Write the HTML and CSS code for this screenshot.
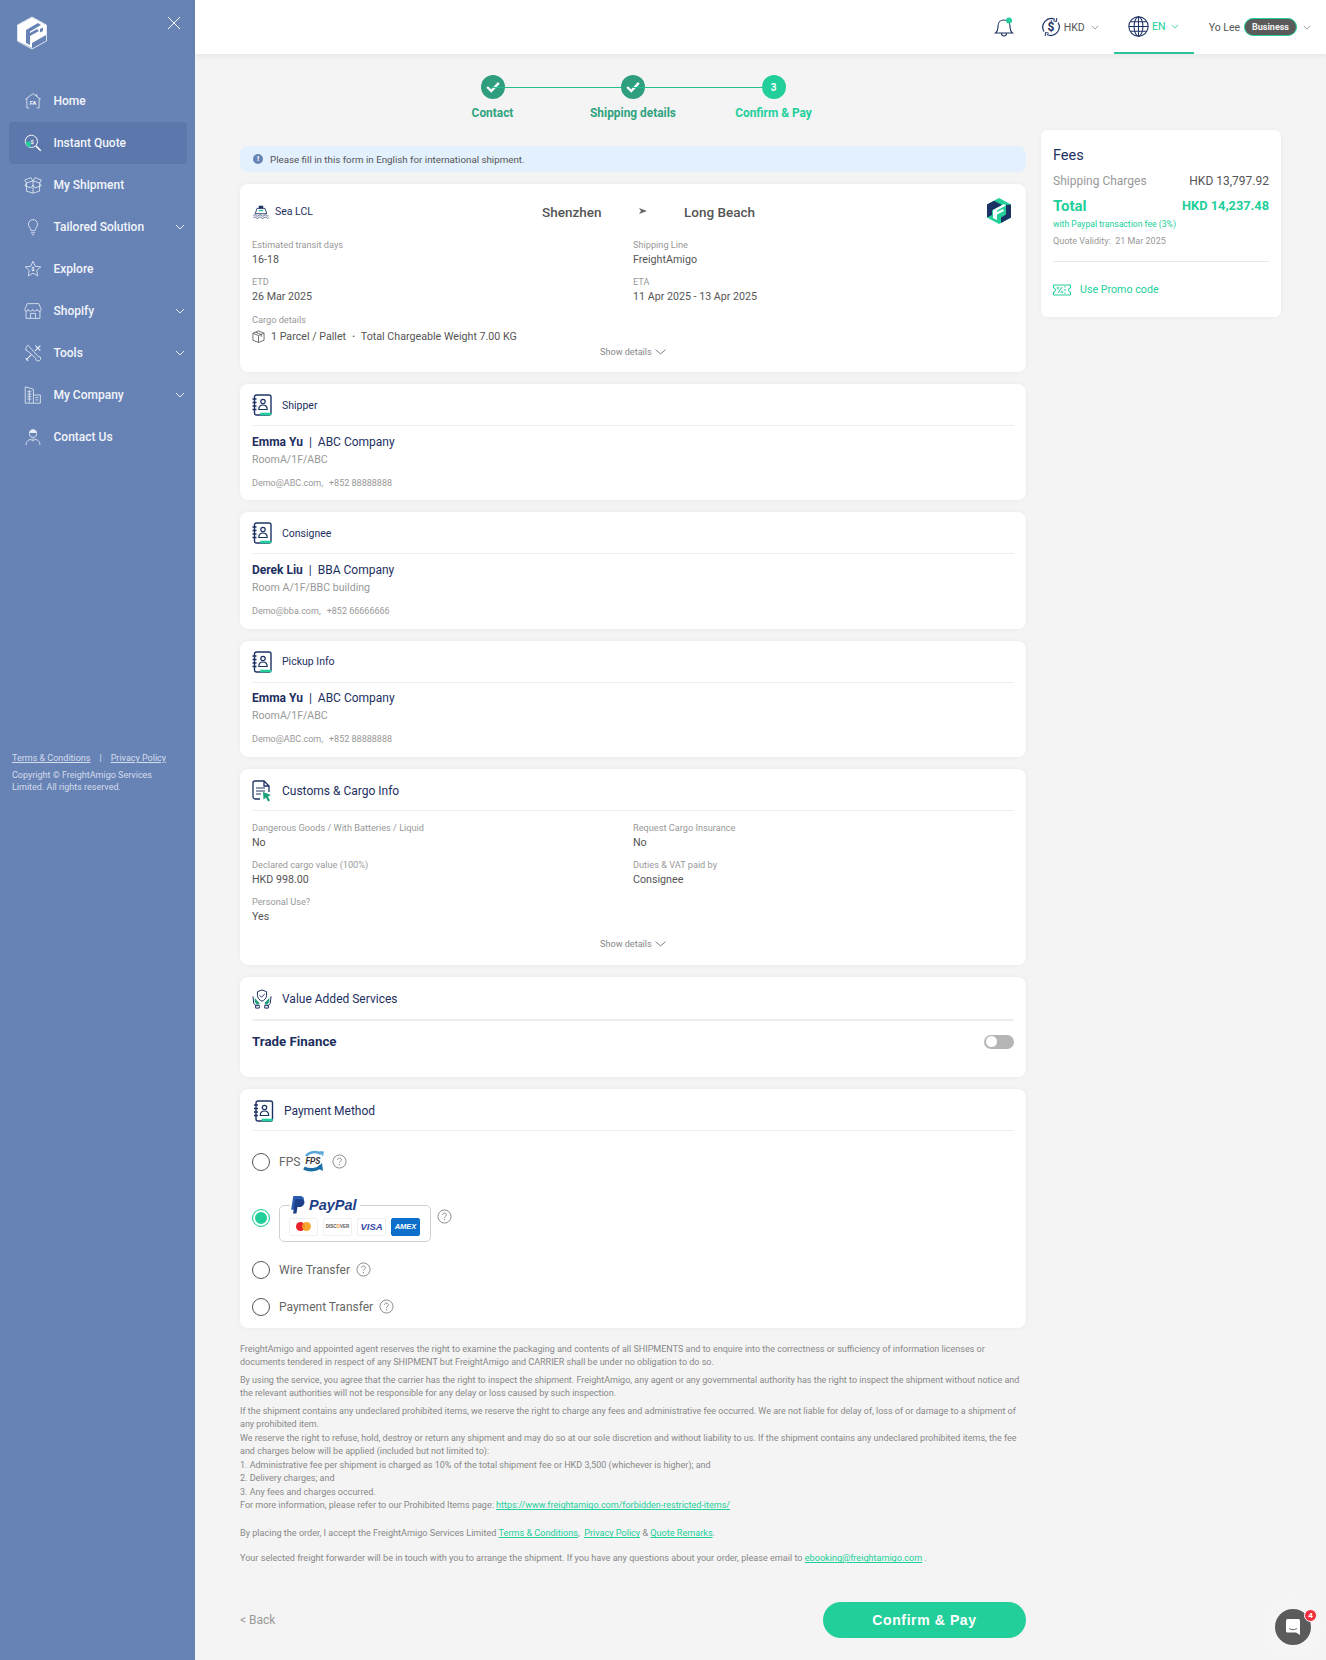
FILE: index.html
```html
<!DOCTYPE html>
<html lang="en">
<head>
  <meta charset="UTF-8">
  <meta name="viewport" content="width=device-width, initial-scale=1.0">
  <title>FreightAmigo - Confirm &amp; Pay</title>
  <link rel="stylesheet" href="styles.css">
</head>
<body>
  <svg class="defs" width="0" height="0">
    <symbol id="book" viewBox="0 0 20 22">
      <rect x="2.500" y="1" width="16.500" height="20" rx="2" fill="none" stroke="#1d3264" stroke-width="1.400"/>
      <path d="M9 19.500h9.500v1H9z" fill="#22cf9b" stroke="#22cf9b" stroke-width="1.600"/>
      <path d="M.5 5h4M.5 8.500h4M.5 12h4M.5 15.500h4" stroke="#1d3264" stroke-width="1.300"/>
      <circle cx="11" cy="7.500" r="2.200" fill="none" stroke="#1d3264" stroke-width="1.200"/>
      <path d="M6.800 15.500c0-3 1.800-4.500 4.200-4.500s4.200 1.500 4.200 4.500z" fill="none" stroke="#1d3264" stroke-width="1.200"/>
    </symbol>
    <symbol id="chev" viewBox="0 0 10 6">
      <path d="M1 1l4 4 4-4" fill="none" stroke="currentColor" stroke-width="1"/>
    </symbol>
    <symbol id="help" viewBox="0 0 16 16">
      <circle cx="8" cy="8" r="7" fill="none" stroke="#888" stroke-width="1"/>
      <path d="M5.900 6.300c0-1.300 1-2 2.100-2s2.100.7 2.100 1.900c0 1.500-2.100 1.500-2.100 3.200" fill="none" stroke="#888" stroke-width="1"/>
      <circle cx="8" cy="11.400" r=".7" fill="#888"/>
    </symbol>
  </svg>

  <div class="page">
    <aside class="sidebar">
      <div class="side-top">
        <svg class="side-logo" viewBox="0 0 32 34">
          <polygon points="16,1 30.500,9 30.500,25 16,33 1.500,25 1.500,9" fill="none" stroke="#fff" stroke-width=".8"/>
          <polygon points="16,1.500 30,9 30,19 16,27 16,32 2,25 2,9" fill="#fff"/>
          <polygon points="10,14 22,7 25,9 14,15.500 14,17 21,13 23,15 14,20 14,29 10,27" fill="#6783b5"/>
          <polygon points="24,13 27,11.500 27,15 24,16.500" fill="#6783b5"/>
        </svg>
        <svg class="side-close" viewBox="0 0 14 14"><path d="M1 1l12 12M13 1L1 13" stroke="#fff" stroke-width="1"/></svg>
      </div>

      <nav class="side-nav">
        <a class="nav-item">
          <svg class="nav-icon" viewBox="0 0 22 22"><path d="M1.500 9L11 2l9.500 7M3.500 8v11.500h3M18.500 8v11.500h-3M15.500 2.500v3" fill="none" stroke="#e6ecf6" stroke-width="1"/><text x="11" y="16" class="nav-icon-text" text-anchor="middle">FA</text></svg>
          <span>Home</span>
        </a>
        <a class="nav-item active">
          <svg class="nav-icon" viewBox="0 0 22 22"><circle cx="9" cy="9" r="7.500" fill="none" stroke="#fff" stroke-width="1.100"/><path d="M2 11a7.500 7.500 0 0 0 6 5.500V9.500H3z" fill="#22cf9b"/><path d="M14.500 14.500l6 6" stroke="#fff" stroke-width="1.800"/><text x="10" y="12.500" class="nav-icon-text" text-anchor="middle">$</text></svg>
          <span>Instant Quote</span>
        </a>
        <a class="nav-item">
          <svg class="nav-icon" viewBox="0 0 22 22"><path d="M11 6l8 2.500v10L11 21l-8-2.500v-10zM11 6v15M3 8.500L.800 5 8.500 2 11 6l2.500-4 7.700 3L19 8.500M3 8.500L1 12l7.500 2.500L11 11l2.500 3.500L21 12l-2-3.500" fill="none" stroke="#e6ecf6" stroke-width="1"/></svg>
          <span>My Shipment</span>
        </a>
        <a class="nav-item">
          <svg class="nav-icon" viewBox="0 0 22 22"><path d="M8.500 15.500c0-3-3-4-3-8a5.500 5.500 0 0 1 11 0c0 4-3 5-3 8zM8.500 18h5M9.500 20.500h3" fill="none" stroke="#e6ecf6" stroke-width="1"/></svg>
          <span>Tailored Solution</span>
          <svg class="nav-chev"><use href="#chev"/></svg>
        </a>
        <a class="nav-item">
          <svg class="nav-icon" viewBox="0 0 22 22"><path d="M11 1.500l2.800 6.200 6.700.7-5 4.500 1.400 6.600-5.900-3.400-5.900 3.400 1.400-6.600-5-4.500 6.700-.7z" fill="none" stroke="#e6ecf6" stroke-width="1"/><text x="11" y="13.500" class="nav-icon-text" text-anchor="middle">$</text></svg>
          <span>Explore</span>
        </a>
        <a class="nav-item">
          <svg class="nav-icon" viewBox="0 0 22 22"><path d="M4 2h14l3 7c0 1.500-1 2-2.500 2s-2.500-.5-2.500-2c0 1.500-1.500 2-3 2s-2.500-.5-2.500-2c0 1.500-1.500 2-3 2S5 10.500 5 9c0 1.500-1 2-2.500 2S1 10.500 1 9zM2.500 11v9h17v-9M8 20v-6h6v6" fill="none" stroke="#e6ecf6" stroke-width="1"/></svg>
          <span>Shopify</span>
          <svg class="nav-chev"><use href="#chev"/></svg>
        </a>
        <a class="nav-item">
          <svg class="nav-icon" viewBox="0 0 22 22"><path d="M3 3l2-1.500 4 4.500 8 9 3 1 .5 3-2.500 2-3-1-1-3-9-8-3-1.500z" fill="none" stroke="#e6ecf6" stroke-width="1"/><path d="M20 2l-6.500 6.500M14 2l6 6M3 19l6-6M5 20.500l-3-3" fill="none" stroke="#e6ecf6" stroke-width="1.400"/></svg>
          <span>Tools</span>
          <svg class="nav-chev"><use href="#chev"/></svg>
        </a>
        <a class="nav-item">
          <svg class="nav-icon" viewBox="0 0 22 22"><path d="M1.500 1l10 3v17h-10zM11.500 11h8.500v10h-8.500M4 7h5M4 10h5M4 13h5M4 16h5M6.500 5v15M14 14h3.500M14 17h3.500" fill="none" stroke="#e6ecf6" stroke-width="1"/></svg>
          <span>My Company</span>
          <svg class="nav-chev"><use href="#chev"/></svg>
        </a>
        <a class="nav-item">
          <svg class="nav-icon" viewBox="0 0 22 22"><circle cx="11" cy="7" r="4.500" fill="none" stroke="#e6ecf6" stroke-width="1"/><path d="M6.500 6c0-6 9-6 9 0h-9z" fill="#e6ecf6"/><path d="M2.500 21c0-5 3.500-7.500 8.500-7.500s8.500 2.500 8.500 7.500M9 15.500h3.500" fill="none" stroke="#e6ecf6" stroke-width="1"/></svg>
          <span>Contact Us</span>
        </a>
      </nav>

      <div class="side-foot">
        <div class="side-links"><a>Terms &amp; Conditions</a><span>|</span><a>Privacy Policy</a></div>
        <p>Copyright © FreightAmigo Services Limited. All rights reserved.</p>
      </div>
    </aside>

    <div class="right-side">
      <header class="topbar">
        <div class="top-item bell">
          <svg class="ic-bell" viewBox="0 0 20 20"><path d="M1.500 16c2-1.500 2.500-3 2.500-7 0-3.500 2.500-6 6-6s6 2.500 6 6c0 4 .5 5.500 2.500 7zM7.500 16.500a2.500 2.500 0 0 0 5 0" fill="none" stroke="#1d3264" stroke-width="1.100"/><circle cx="15" cy="3.500" r="3" fill="#22cf9b"/></svg>
        </div>
        <div class="top-item cur">
          <svg class="ic-cur" viewBox="0 0 20 20"><path d="M3 14.500A8.500 8.500 0 0 1 14 2.500M17 5.500A8.500 8.500 0 0 1 6 17.500" fill="none" stroke="#1d3264" stroke-width="1.200"/><path d="M15.800 1l-.3 3.500-3.300-.7M4.200 19l.3-3.500 3.300.7" fill="none" stroke="#1d3264" stroke-width="1"/><text x="10" y="14" class="cur-sign" text-anchor="middle">$</text></svg>
          <span>HKD</span>
          <svg class="top-chev"><use href="#chev"/></svg>
        </div>
        <div class="top-item lang">
          <svg class="ic-globe" viewBox="0 0 20 20"><g fill="none" stroke="#1d3264" stroke-width="1"><circle cx="10" cy="10" r="9.200"/><ellipse cx="10" cy="10" rx="4.200" ry="9.200"/><path d="M10 .8v18.400M.8 10h18.400M2 5.500h16M2 14.500h16"/></g></svg>
          <span>EN</span>
          <svg class="top-chev"><use href="#chev"/></svg>
        </div>
        <div class="top-item user">
          <span>Yo Lee</span>
          <b class="pill">Business</b>
          <svg class="top-chev"><use href="#chev"/></svg>
        </div>
      </header>

      <main class="content">
        <div class="col-main">
          <div class="stepper">
            <div class="step done">
              <i class="dot"><svg viewBox="0 0 12 10"><path d="M1 5l3.500 3.500L11 1.500" fill="none" stroke="#fff" stroke-width="2"/></svg></i>
              <span>Contact</span>
            </div>
            <div class="step done">
              <i class="dot"><svg viewBox="0 0 12 10"><path d="M1 5l3.500 3.500L11 1.500" fill="none" stroke="#fff" stroke-width="2"/></svg></i>
              <span>Shipping details</span>
            </div>
            <div class="step now">
              <i class="dot">3</i>
              <span>Confirm &amp; Pay</span>
            </div>
          </div>

          <div class="notice">
            <i class="notice-dot">!</i>
            <span>Please fill in this form in English for international shipment.</span>
          </div>

          <section class="card top-card">
            <div class="route">
              <div class="mode">
                <svg class="ic-ship" viewBox="0 0 18 16"><path d="M6.500 1.500h5v3h-5z" fill="#1d3264"/><path d="M4.500 4.500h9l2 6h-13z" fill="none" stroke="#1d3264" stroke-width="1"/><path d="M6.500 7h5" stroke="#22cf9b" stroke-width="1.400"/><path d="M.5 12.500c1.500-1 2-1 3 0s1.500 1 3 0 2-1 3 0 1.500 1 3 0 2-1 3 0 1 .8 2 .2M.5 15c1.500-1 2-1 3 0s1.500 1 3 0 2-1 3 0 1.500 1 3 0 2-1 3 0 1 .8 2 .2" fill="none" stroke="#1d3264" stroke-width=".8"/></svg>
                <span>Sea LCL</span>
              </div>
              <div class="port from">Shenzhen</div>
              <svg class="route-arrow" viewBox="0 0 8 6"><path d="M0 0l8 3-8 3 2-3z" fill="#666"/></svg>
              <div class="port to">Long Beach</div>
              <svg class="ic-logo" viewBox="0 0 24 26">
                <polygon points="12,0 24,6.500 24,19.500 12,26 0,19.500 0,6.500" fill="#22cf9b"/>
                <polygon points="0,6.500 7,2.800 15,7 5,12.500 5,17 0,19.500" fill="#1d3264"/>
                <polygon points="24,6.500 24,19.500 14,25 14,19.500 19,16.500 19,7" fill="#1d3264"/>
                <polygon points="6,12 17,6 19,7.500 10,12.500 10,14 16,11 17,13 10,16.500 10,22 6,20" fill="#fff"/>
              </svg>
            </div>

            <div class="info-grid">
              <div class="info"><label>Estimated transit days</label><p>16-18</p></div>
              <div class="info"><label>Shipping Line</label><p>FreightAmigo</p></div>
              <div class="info"><label>ETD</label><p>26 Mar 2025</p></div>
              <div class="info"><label>ETA</label><p>11 Apr 2025 - 13 Apr 2025</p></div>
            </div>
            <div class="cargo">
              <label>Cargo details</label>
              <p>
                <svg class="ic-box" viewBox="0 0 14 14"><path d="M7 1l6 2.500v7.500L7 13.500 1 11V3.500zM1 3.500L7 6l6-2.500M7 6v7.500M4 2.300l6 2.500v2.500" fill="none" stroke="#666" stroke-width="1"/></svg>
                1 Parcel / Pallet<span class="sep">•</span>Total Chargeable Weight 7.00 KG
              </p>
            </div>
            <div class="show-details">Show details <svg class="show-chev" viewBox="0 0 12 6"><path d="M.5.5L6 5 11.500.5" fill="none" stroke="#666" stroke-width=".9"/></svg></div>
          </section>

          <section class="card party">
            <div class="card-head"><svg class="ic-head"><use href="#book"/></svg><h3 class="head-small">Shipper</h3></div>
            <p class="name"><b>Emma Yu</b><span>|</span>ABC Company</p>
            <p class="addr">RoomA/1F/ABC</p>
            <p class="contact">Demo@ABC.com,<span></span>+852 88888888</p>
          </section>

          <section class="card party">
            <div class="card-head"><svg class="ic-head"><use href="#book"/></svg><h3 class="head-small">Consignee</h3></div>
            <p class="name"><b>Derek Liu</b><span>|</span>BBA Company</p>
            <p class="addr">Room A/1F/BBC building</p>
            <p class="contact">Demo@bba.com,<span></span>+852 66666666</p>
          </section>

          <section class="card party">
            <div class="card-head"><svg class="ic-head"><use href="#book"/></svg><h3 class="head-small">Pickup Info</h3></div>
            <p class="name"><b>Emma Yu</b><span>|</span>ABC Company</p>
            <p class="addr">RoomA/1F/ABC</p>
            <p class="contact">Demo@ABC.com,<span></span>+852 88888888</p>
          </section>

          <section class="card customs">
            <div class="card-head low">
              <svg class="ic-head" viewBox="0 0 20 22"><path d="M8 19H3a2 2 0 0 1-2-2V3a2 2 0 0 1 2-2h9l5 5v6M12 1v5h5" fill="none" stroke="#1d3264" stroke-width="1.300"/><path d="M4 8h9M4 11h9M4 14h5" stroke="#1d3264" stroke-width="1.200"/><path d="M11 12l8 3-3 1.500 2 4-2 1-2-4-2.500 2z" fill="#1f9f7c"/></svg>
              <h3>Customs &amp; Cargo Info</h3>
            </div>
            <div class="info-grid">
              <div class="info"><label>Dangerous Goods / With Batteries / Liquid</label><p>No</p></div>
              <div class="info"><label>Request Cargo Insurance</label><p>No</p></div>
              <div class="info"><label>Declared cargo value (100%)</label><p>HKD 998.00</p></div>
              <div class="info"><label>Duties &amp; VAT paid by</label><p>Consignee</p></div>
              <div class="info"><label>Personal Use?</label><p>Yes</p></div>
            </div>
            <div class="show-details">Show details <svg class="show-chev" viewBox="0 0 12 6"><path d="M.5.5L6 5 11.500.5" fill="none" stroke="#666" stroke-width=".9"/></svg></div>
          </section>

          <section class="card services">
            <div class="card-head thick low">
              <svg class="ic-head" viewBox="0 0 22 22"><path d="M11 1l5 2v4c0 3-2 5-5 6.500C8 12 6 10 6 7V3z" fill="none" stroke="#1d3264" stroke-width="1.100"/><path d="M8.500 7l2 2 3.500-3.500" fill="none" stroke="#1d3264" stroke-width="1.100"/><path d="M1 8l1 8 3 3M21 8l-1 8-3 3" fill="none" stroke="#1d3264" stroke-width="1.100"/><path d="M3 10l5 5v2H5L3 14zM19 10l-5 5v2h3l2-3z" fill="#1f9f7c"/><path d="M4 18h4v3H4zM14 18h4v3h-4z" fill="none" stroke="#1d3264" stroke-width="1.100"/></svg>
              <h3>Value Added Services</h3>
            </div>
            <div class="finance">
              <span>Trade Finance</span>
              <i class="toggle"></i>
            </div>
          </section>

          <section class="card payment">
            <div class="card-head low"><svg class="ic-head pay-book"><use href="#book"/></svg><h3>Payment Method</h3></div>
            <div class="pay-row fps">
              <i class="radio"></i>
              <span>FPS</span>
              <svg class="ic-fps" viewBox="0 0 26 24"><path d="M6 6A10 8 0 0 1 21 4" fill="none" stroke="#5aa6d8" stroke-width="2.500"/><path d="M19 1l5 .5-1 5z" fill="#5aa6d8"/><path d="M4 18a11 7 0 0 0 17-2" fill="none" stroke="#1d6fa8" stroke-width="3.500"/><path d="M17 18l6 3-1-8z" fill="#1d6fa8"/><text x="13" y="14" class="fps-text" text-anchor="middle">FPS</text></svg>
              <svg class="ic-help"><use href="#help"/></svg>
            </div>
            <div class="pay-row paypal">
              <i class="radio on"></i>
              <div class="pp-box">
                <div class="pp-logo">
                  <svg class="ic-pp" viewBox="0 0 14 17"><path d="M3 0h6c3 0 4.500 1.500 4 4-.5 3-2.500 4.500-5.500 4.500H5.500L4.500 13H1z" fill="#2a5db0"/><path d="M5 3h5c3 0 4 1.500 3.500 3.500C13 9 11 10.500 8.500 10.500H7L6 16.500H2.800z" fill="#1d3f87"/></svg>
                  <em>PayPal</em>
                </div>
                <div class="pp-cards">
                  <span class="pp-card"><i class="mc a"></i><i class="mc b"></i></span>
                  <span class="pp-card disc">DISC<u>O</u>VER</span>
                  <span class="pp-card visa">VISA</span>
                  <span class="pp-card amex">AMEX</span>
                </div>
              </div>
              <svg class="ic-help"><use href="#help"/></svg>
            </div>
            <div class="pay-row wire">
              <i class="radio"></i>
              <span>Wire Transfer</span>
              <svg class="ic-help"><use href="#help"/></svg>
            </div>
            <div class="pay-row transfer">
              <i class="radio"></i>
              <span>Payment Transfer</span>
              <svg class="ic-help"><use href="#help"/></svg>
            </div>
          </section>

          <div class="legal">
            <p>FreightAmigo and appointed agent reserves the right to examine the packaging and contents of all SHIPMENTS and to enquire into the correctness or sufficiency of information licenses or<br>documents tendered in respect of any SHIPMENT but FreightAmigo and CARRIER shall be under no obligation to do so.</p>
            <p>By using the service, you agree that the carrier has the right to inspect the shipment. FreightAmigo, any agent or any governmental authority has the right to inspect the shipment without notice and<br>the relevant authorities will not be responsible for any delay or loss caused by such inspection.</p>
            <p>If the shipment contains any undeclared prohibited items, we reserve the right to charge any fees and administrative fee occurred. We are not liable for delay of, loss of or damage to a shipment of<br>any prohibited item.<br>
            We reserve the right to refuse, hold, destroy or return any shipment and may do so at our sole discretion and without liability to us. If the shipment contains any undeclared prohibited items, the fee<br>and charges below will be applied (included but not limited to):<br>
            1. Administrative fee per shipment is charged as 10% of the total shipment fee or HKD 3,500 (whichever is higher); and<br>
            2. Delivery charges; and<br>
            3. Any fees and charges occurred.<br>
            For more information, please refer to our Prohibited Items page: <a>https://www.freightamigo.com/forbidden-restricted-items/</a></p>
            <p class="accept">By placing the order, I accept the FreightAmigo Services Limited <a>Terms &amp; Conditions</a>,&nbsp; <a>Privacy Policy</a> &amp; <a>Quote Remarks</a>.</p>
            <p class="touch">Your selected freight forwarder will be in touch with you to arrange the shipment. If you have any questions about your order, please email to <a>ebooking@freightamigo.com</a> .</p>
          </div>

          <div class="actions">
            <a class="back">&lt; Back</a>
            <button class="confirm">Confirm &amp; Pay</button>
          </div>
        </div>

        <aside class="fees">
          <h2>Fees</h2>
          <div class="fee-row"><span class="fee-label">Shipping Charges</span><span class="fee-val">HKD 13,797.92</span></div>
          <div class="fee-row total"><span>Total</span><span>HKD 14,237.48</span></div>
          <p class="fee-note">with Paypal transaction fee (3%)</p>
          <p class="fee-valid">Quote Validity:&nbsp; 21 Mar 2025</p>
          <div class="promo">
            <svg class="ic-promo" viewBox="0 0 18 12"><path d="M.5 1h17v3a2 2 0 0 0 0 4v3H.5V8a2 2 0 0 0 0-4z" fill="none" stroke="#22cf9b" stroke-width="1"/><path d="M5 9l4-6M12 2v1.500M12 5v2M12 8.500V10" stroke="#22cf9b" stroke-width="1"/><circle cx="5" cy="4" r="1" fill="none" stroke="#22cf9b" stroke-width=".8"/><circle cx="9" cy="8" r="1" fill="none" stroke="#22cf9b" stroke-width=".8"/></svg>
            <span>Use Promo code</span>
          </div>
        </aside>
      </main>
    </div>
  </div>

  <div class="chat">
    <svg viewBox="0 0 16 18"><path d="M2.500 1h11A1.500 1.500 0 0 1 15 2.500V17l-4-2.500H2.500A1.500 1.500 0 0 1 1 13V2.500A1.500 1.500 0 0 1 2.500 1z" fill="#fff"/><path d="M4 10.500c2.500 1.500 5.500 1.500 8 0" fill="none" stroke="#5b5b5b" stroke-width=".9"/></svg>
    <b class="chat-badge">4</b>
  </div>
</body>
</html>
```

FILE: styles.css
```css
* {
  box-sizing: border-box;
}

body {
  font-family: Roboto, Arial, sans-serif;
  margin: 0;
  padding: 0;
  background-color: #f4f4f4;
  color: #555;
  font-size: 11px;
}

p, h2, h3, label {
  margin: 0;
  font-weight: 400;
}

.defs {
  position: absolute;
}

.page {
  display: flex;
  height: 1660px;
  overflow: hidden;
}

/* sidebar */
.sidebar {
  width: 195px;
  flex-shrink: 0;
  background-color: #6783b5;
  color: #fff;
  display: flex;
  flex-direction: column;
}

.side-top {
  height: 80px;
  padding: 16px 14px 0 16px;
  display: flex;
  justify-content: space-between;
  align-items: flex-start;
}

.side-logo {
  width: 32px;
  height: 34px;
}

.side-close {
  width: 14px;
  height: 14px;
}

.side-nav {
  padding: 0 8px 0 9px;
}

.nav-item {
  height: 42px;
  display: flex;
  align-items: center;
  padding: 0 0 0 15px;
  border-radius: 4px;
  font-size: 12px;
  font-weight: 500;
  color: #f2f5fb;
}

.nav-item.active {
  background-color: #5c77ab;
}

.nav-icon {
  width: 18px;
  height: 18px;
  margin-right: 11.500px;
  flex-shrink: 0;
}

.nav-icon-text {
  font-size: 7px;
  font-weight: 700;
  fill: #f2f5fb;
}

.nav-chev {
  width: 10px;
  height: 6px;
  margin-left: auto;
  margin-right: 2px;
  color: #e6ecf6;
}

.side-foot {
  margin-top: 294px;
  padding: 0 12px;
  font-size: 9px;
  color: #d5ddec;
}

.side-links {
  display: flex;
  gap: 9px;
  line-height: 12px;
  margin-bottom: 5px;
}

.side-links a {
  text-decoration: underline;
}

.side-foot p {
  line-height: 12px;
  width: 160px;
}

/* top bar */
.right-side {
  flex: 1;
  min-width: 0;
}

.topbar {
  height: 54px;
  background-color: #fff;
  box-shadow: 0 2px 6px rgba(0, 0, 0, 0.06);
  display: flex;
  justify-content: flex-end;
  align-items: center;
  padding-right: 15px;
  font-size: 10.500px;
  color: #555;
}

.top-item {
  display: flex;
  align-items: center;
  height: 54px;
}

.bell {
  margin-right: 27px;
}

.ic-bell {
  width: 20px;
  height: 20px;
}

.cur {
  margin-right: 15px;
}

.ic-cur {
  width: 20px;
  height: 20px;
  margin-right: 3px;
}

.cur-sign {
  font-size: 12px;
  font-weight: 700;
  fill: #1d3264;
}

.ic-globe {
  width: 21px;
  height: 21px;
  margin-right: 3px;
}

.top-chev {
  width: 8px;
  height: 5px;
  margin-left: 6px;
  color: #888;
}

.lang {
  width: 80px;
  justify-content: center;
  border-bottom: 2px solid #2cc39c;
  color: #22cf9b;
  margin-right: 15px;
}

.lang .top-chev {
  color: #22cf9b;
}

.pill {
  margin-left: 4px;
  height: 18px;
  line-height: 16px;
  padding: 0 7px;
  border: 1px solid #22cf9b;
  border-radius: 9px;
  background-color: #5a5a5a;
  color: #f5f5f5;
  font-size: 9px;
  font-weight: 700;
}

/* content */
.content {
  display: flex;
  gap: 15px;
  padding: 0 45px;
}

.col-main {
  width: 786px;
  flex-shrink: 0;
}

.stepper {
  display: flex;
  justify-content: center;
  padding-top: 21px;
  height: 92px;
}

.step {
  width: 140.500px;
  display: flex;
  flex-direction: column;
  align-items: center;
  position: relative;
  font-size: 11.900px;
  font-weight: 700;
}

.step + .step::before {
  content: "";
  position: absolute;
  top: 11.500px;
  right: 50%;
  width: 100%;
  height: 1px;
  background-color: #23bd90;
}

.dot {
  width: 24px;
  height: 24px;
  border-radius: 50%;
  display: flex;
  align-items: center;
  justify-content: center;
  color: #fff;
  font-style: normal;
  font-size: 10px;
  font-weight: 700;
  position: relative;
  margin-bottom: 6px;
}

.dot svg {
  width: 14px;
  height: 12px;
}

.done .dot {
  background-color: #2f9e7e;
}

.done span {
  color: #2fa37f;
  line-height: 16px;
}

.now .dot {
  background-color: #22cf9b;
}

.now span {
  color: #22cf9b;
  line-height: 16px;
}

.notice {
  height: 26px;
  margin-bottom: 12px;
  padding: 0 13px;
  background-color: #e3f0fd;
  border-radius: 8px;
  display: flex;
  align-items: center;
  font-size: 9.750px;
  color: #555;
}

.notice-dot {
  width: 10px;
  height: 10px;
  border-radius: 50%;
  background-color: #6783b5;
  color: #fff;
  font-size: 8px;
  font-weight: 700;
  font-style: normal;
  line-height: 10px;
  text-align: center;
  margin-right: 7px;
}

.card {
  background-color: #fff;
  border-radius: 8px;
  box-shadow: 0 0 4px rgba(0, 0, 0, 0.05);
  margin-bottom: 12px;
  padding: 0 12px;
}

.show-details {
  text-align: center;
  line-height: 14px;
  font-size: 9.100px;
  color: #888;
}

.show-chev {
  width: 11px;
  height: 6px;
  margin-left: 1px;
}

.top-card {
  padding-bottom: 13.500px;
}

.route {
  height: 39px;
  padding-top: 15px;
  margin-bottom: 14.500px;
  display: flex;
  align-items: center;
}

.mode {
  display: flex;
  align-items: center;
  width: 290px;
  color: #1d2f5f;
  font-size: 10.500px;
  margin-top: 1px;
}

.ic-ship {
  width: 16px;
  height: 15px;
  margin-right: 6px;
  margin-left: 1px;
}

.port {
  font-size: 13.500px;
  font-weight: 500;
  color: #555;
  width: 82px;
  margin-top: 1px;
}

.from {
  width: 92px;
}

.route-arrow {
  width: 8px;
  height: 6px;
  margin-left: 5px;
  margin-right: 37px;
}

.ic-logo {
  width: 24px;
  height: 26px;
  margin-left: auto;
  margin-right: 3px;
  margin-top: -1px;
}

.info-grid {
  display: grid;
  grid-template-columns: 381px 381px;
  row-gap: 7px;
}

.info label, .cargo label {
  display: block;
  line-height: 14px;
  font-size: 9.200px;
  color: #999;
}

.info p, .cargo p {
  line-height: 16px;
  font-size: 10.700px;
  color: #555;
}

.cargo {
  margin-top: 8.500px;
  height: 31.500px;
}

.cargo p {
  display: flex;
  align-items: center;
  margin-top: 1.500px;
}

.ic-box {
  width: 13px;
  height: 13px;
  margin-right: 6px;
}

.sep {
  margin: 0 6px;
  font-size: 8px;
}

.card-head {
  height: 42px;
  padding-top: 1px;
  display: flex;
  align-items: center;
  border-bottom: 1px solid #eee;
}

.card-head.low {
  padding-top: 3px;
}

.card-head.thick {
  border-bottom-width: 2px;
  height: 44px;
}

.card-head h3 {
  font-size: 12px;
  color: #1d2f5f;
  margin-left: 10px;
}

.card-head .head-small {
  font-size: 10.500px;
}

.ic-head {
  width: 20px;
  height: 22px;
  flex-shrink: 0;
}

.party {
  height: 116.330px;
}

.name {
  margin-top: 7.500px;
  line-height: 16px;
  font-size: 12px;
  color: #1d2f5f;
}

.name b {
  font-weight: 700;
}

.name span {
  margin: 0 6px;
}

.addr {
  margin-top: 2px;
  line-height: 16px;
  color: #999;
  font-size: 10.600px;
}

.contact {
  margin-top: 7px;
  line-height: 16px;
  color: #999;
  font-size: 9px;
}

.contact span {
  margin-left: 6px;
}

.customs {
  padding-bottom: 14px;
}

.customs .info-grid {
  margin-top: 10px;
}

.customs .show-details {
  margin-top: 12px;
}

.services {
  height: 100px;
}

.finance {
  margin-top: 11px;
  display: flex;
  justify-content: space-between;
  align-items: center;
  height: 20px;
  font-size: 13.300px;
  font-weight: 700;
  color: #1d2f5f;
}

.toggle {
  width: 30px;
  height: 14px;
  border-radius: 7px;
  background-color: #b5b5b5;
  position: relative;
}

.toggle::before {
  content: "";
  position: absolute;
  left: 1.500px;
  top: 1.500px;
  width: 11px;
  height: 11px;
  border-radius: 50%;
  background-color: #fff;
}

.payment {
  height: 239px;
}

.pay-book {
  width: 21px;
  margin-left: 1px;
}

.pay-row {
  display: flex;
  align-items: center;
  font-size: 12px;
  color: #666;
}

.radio {
  width: 18px;
  height: 18px;
  border: 1px solid #555;
  border-radius: 50%;
  margin-right: 9px;
  flex-shrink: 0;
  background-color: #fff;
}

.radio.on {
  border: 1px solid #22cf9b;
  box-shadow: inset 0 0 0 2px #fff, inset 0 0 0 9px #22cf9b;
}

.ic-help {
  width: 15px;
  height: 15px;
}

.fps {
  height: 28px;
  margin-top: 17px;
}

.ic-fps {
  width: 26px;
  height: 26px;
  margin-right: 6px;
}

.fps-text {
  font-size: 8.500px;
  font-style: italic;
  font-weight: 700;
  fill: #333;
}

.paypal {
  height: 48px;
  margin-top: 18px;
}

.paypal .ic-help {
  margin-left: 6px;
  margin-top: -2px;
}

.pp-box {
  width: 152px;
  height: 37px;
  margin-top: 11px;
  border: 1px solid #d0d0d0;
  border-radius: 5px;
  position: relative;
  padding: 12px 0 0 9px;
}

.pp-logo {
  position: absolute;
  left: 10px;
  top: -10px;
  display: flex;
  align-items: center;
  background-color: #fff;
  padding-right: 3px;
}

.ic-pp {
  width: 15px;
  height: 18px;
  margin-right: 4px;
}

.pp-logo em {
  font-family: "Liberation Sans", Arial, sans-serif;
  font-size: 14.500px;
  font-weight: 700;
  color: #1d3f87;
}

.pp-cards {
  display: flex;
  gap: 5px;
}

.pp-card {
  width: 29px;
  height: 18px;
  border: 1px solid #f0f0f0;
  border-radius: 2px;
  display: flex;
  align-items: center;
  justify-content: center;
  font-family: "Liberation Sans", Arial, sans-serif;
  font-weight: 700;
}

.mc {
  width: 9px;
  height: 9px;
  border-radius: 50%;
}

.mc.a {
  background-color: #e8202a;
}

.mc.b {
  background-color: #f79e1b;
  margin-left: -3px;
  opacity: 0.9;
}

.disc {
  font-size: 4.500px;
  color: #555;
}

.disc u {
  color: #f08a24;
  text-decoration: none;
}

.visa {
  font-size: 9.500px;
  font-style: italic;
  color: #3a4aa8;
}

.amex {
  background-color: #0e6fcb;
  border-color: #0e6fcb;
  color: #fff;
  font-size: 7.500px;
  font-style: italic;
}

.wire {
  height: 24px;
  margin-top: 16px;
}

.transfer {
  height: 24px;
  margin-top: 13px;
}

.wire .ic-help, .transfer .ic-help {
  margin-left: 6px;
}

.legal {
  padding-top: 3px;
  font-size: 9px;
  line-height: 13.500px;
  color: #888;
}

.legal p {
  margin-bottom: 4px;
}

.legal a {
  color: #22cf9b;
  text-decoration: underline;
}

.legal .accept {
  margin-top: 14.500px;
  margin-bottom: 0;
  font-size: 9.100px;
}

.legal .touch {
  margin-top: 11.500px;
  margin-bottom: 0;
  font-size: 9.100px;
}

.actions {
  margin-top: 36px;
  display: flex;
  justify-content: space-between;
  align-items: center;
}

.back {
  color: #999;
  font-size: 12px;
}

.confirm {
  width: 203px;
  height: 36px;
  border: none;
  border-radius: 18px;
  background-color: #22cf9b;
  color: #fff;
  font-family: "Liberation Sans", Arial, sans-serif;
  font-size: 14px;
  font-weight: 700;
  letter-spacing: 0.6px;
  cursor: pointer;
}

/* fees */
.fees {
  width: 240px;
  height: 187px;
  margin-top: 76px;
  padding: 16px 12px 0;
  background-color: #fff;
  border-radius: 6px;
  box-shadow: 0 0 4px rgba(0, 0, 0, 0.05);
}

.fees h2 {
  font-size: 14.500px;
  line-height: 20px;
  color: #1d2f5f;
}

.fee-row {
  display: flex;
  justify-content: space-between;
  align-items: center;
  margin-top: 7px;
  line-height: 16px;
  font-size: 12px;
}

.fee-label {
  color: #999;
}

.fee-row.total {
  margin-top: 7px;
  line-height: 20px;
  font-size: 12.800px;
  font-weight: 700;
  color: #22cf9b;
}

.total span:first-child {
  font-size: 15px;
}

.fee-note {
  margin-top: 1px;
  line-height: 14px;
  font-size: 8.650px;
  color: #22cf9b;
}

.fee-valid {
  margin-top: 3px;
  line-height: 14px;
  font-size: 9px;
  color: #999;
}

.promo {
  margin-top: 13px;
  border-top: 1px solid #e8e8e8;
  padding-top: 21px;
  display: flex;
  align-items: center;
  color: #22cf9b;
  font-size: 10.700px;
}

.ic-promo {
  width: 18px;
  height: 12px;
  margin-right: 9px;
}

/* chat */
.chat {
  position: absolute;
  left: 1275px;
  top: 1609px;
  width: 36px;
  height: 36px;
  border-radius: 50%;
  background-color: #5b5b5b;
  box-shadow: 0 0 40px rgba(255, 255, 255, 0.6);
  display: flex;
  align-items: center;
  justify-content: center;
}

.chat svg {
  width: 16px;
  height: 18px;
}

.chat-badge {
  position: absolute;
  right: -6px;
  top: 0;
  width: 13px;
  height: 13px;
  border-radius: 50%;
  background-color: #f0303c;
  border: 1px solid #fff;
  color: #fff;
  font-size: 8px;
  line-height: 11px;
  text-align: center;
}
```
